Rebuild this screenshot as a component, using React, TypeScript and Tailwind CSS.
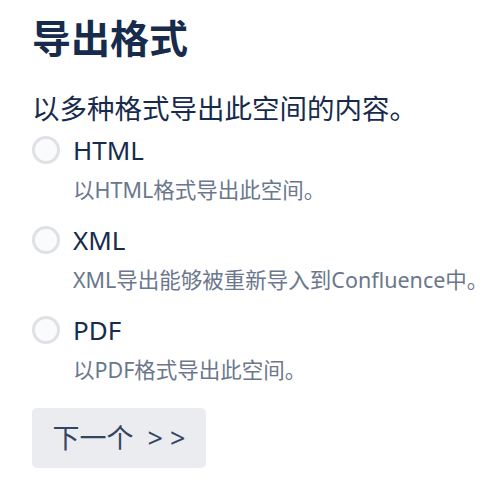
const options = [
  { id: "html", label: "HTML", desc: "以HTML格式导出此空间。" },
  { id: "xml", label: "XML", desc: "XML导出能够被重新导入到Confluence中。" },
  { id: "pdf", label: "PDF", desc: "以PDF格式导出此空间。" },
];

const App = () => {
  return (
    <div
      className="min-h-screen bg-white pl-8 pt-[14px] text-[#172b4d]"
      style={{ fontFamily: '"Noto Sans", "Noto Sans CJK SC", sans-serif' }}
    >
      <h2 className="text-[39px] font-semibold leading-[48px]">导出格式</h2>
      <p className="mt-[27px] text-[27.5px] leading-[40px]">以多种格式导出此空间的内容。</p>
      <div className="mt-px space-y-[10px]">
        {options.map((opt) => (
          <div key={opt.id}>
            <label className="flex h-10 items-center gap-[13px]">
              <span className="h-7 w-7 rounded-full border-[3px] border-[#dfe1e6] bg-[#fafbfc]" />
              <span className="text-[26px] leading-10">{opt.label}</span>
            </label>
            <div className="pl-[41px] text-[21.5px] leading-10 text-[#6b778c]">{opt.desc}</div>
          </div>
        ))}
      </div>
      <button className="mt-[18px] flex h-[60px] w-[174px] items-center justify-center rounded-[5px] bg-[#ebecf0] text-[27px] text-[#344563]">
        下一个&nbsp; &gt; &gt;
      </button>
    </div>
  );
};

export default App;
